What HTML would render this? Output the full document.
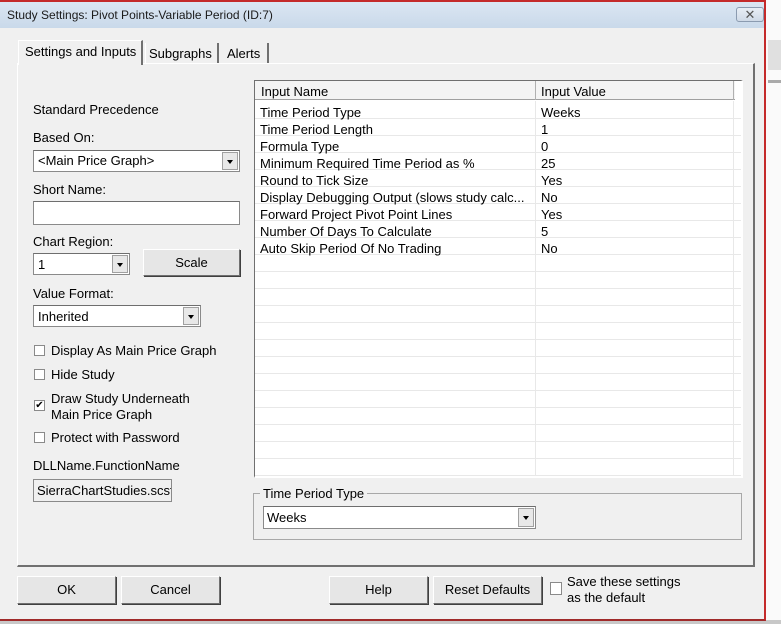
<!DOCTYPE html>
<html><head><style>
*{box-sizing:border-box;margin:0;padding:0}
body{width:781px;height:624px;overflow:hidden;background:#f0f0f0;font-family:"Liberation Sans",sans-serif;font-size:13px;color:#000;position:relative}
.a{position:absolute}
.t{position:absolute;white-space:nowrap;line-height:16px}
.combo{position:absolute;background:#fff;border:1px solid #8a8a8a;border-top-color:#6e6e6e}
.combo .arr{position:absolute;right:1px;top:1px;bottom:1px;width:16px;background:#e8e8e8;border:1px solid #a0a0a0}
.combo .arr:after{content:"";position:absolute;left:4px;top:7px;border-left:3.5px solid transparent;border-right:3.5px solid transparent;border-top:4px solid #000}
.btn{position:absolute;background:#e6e6e6;border:1px solid #fff;border-right-color:#707070;border-bottom-color:#707070;box-shadow:1px 1px 0 #404040;text-align:center;line-height:26px}
.cb{position:absolute;width:11px;height:11px;background:#fff;border:1px solid #8a8a8a}
</style></head><body>
<div class="a" style="left:766px;top:0;width:15px;height:624px;background:#fafafa"></div>
<div class="a" style="left:768px;top:40px;width:13px;height:30px;background:#e0e0e0"></div>
<div class="a" style="left:768px;top:80px;width:13px;height:3px;background:#aaa"></div>
<div class="a" style="left:0;top:620px;width:781px;height:4px;background:#c8c8c8"></div>
<div class="a" style="left:0;top:0;width:766px;height:621px;background:#f0f0f0;border-right:2px solid #c42a2a;border-bottom:2px solid #a02a2a;border-top:2px solid #c42a2a"></div>
<div class="a" style="left:0;top:2px;width:764px;height:26px;background:linear-gradient(#dbe6f2,#c9d9ea)"></div>
<div class="t" style="left:7px;top:7px;font-size:12px;color:#1a1a1a">Study Settings: Pivot Points-Variable Period (ID:7)</div>
<div class="a" style="left:736px;top:7px;width:28px;height:15px;border:1px solid #8b9bb0;border-radius:3px;background:linear-gradient(#e8eef5,#cfdae7);text-align:center;font-size:13px;line-height:13px;color:#555">✕</div>

<div class="a" style="left:17px;top:63px;width:738px;height:504px;border:1px solid #fff;border-right:2px solid #707070;border-bottom:2px solid #707070"></div>
<div class="a" style="left:18px;top:40px;width:125px;height:25px;background:#f0f0f0;border:1px solid #fff;border-right:2px solid #707070;border-bottom:none"></div>
<div class="t" style="left:25px;top:44px">Settings and Inputs</div>
<div class="a" style="left:145px;top:43px;width:74px;height:20px;border-left:1px solid #fff;border-right:2px solid #707070"></div>
<div class="t" style="left:149px;top:46px">Subgraphs</div>
<div class="a" style="left:221px;top:43px;width:48px;height:20px;border-right:2px solid #707070"></div>
<div class="t" style="left:227px;top:46px">Alerts</div>

<div class="t" style="left:33px;top:102px">Standard Precedence</div>
<div class="t" style="left:33px;top:130px">Based On:</div>
<div class="combo" style="left:33px;top:150px;width:207px;height:22px"><span class="t" style="left:4px;top:2px">&lt;Main Price Graph&gt;</span><div class="arr"></div></div>
<div class="t" style="left:33px;top:182px">Short Name:</div>
<div class="combo" style="left:33px;top:201px;width:207px;height:24px"></div>
<div class="t" style="left:33px;top:234px">Chart Region:</div>
<div class="combo" style="left:33px;top:253px;width:97px;height:22px"><span class="t" style="left:4px;top:3px">1</span><div class="arr"></div></div>
<div class="btn" style="left:143px;top:249px;width:97px;height:27px">Scale</div>
<div class="t" style="left:33px;top:286px">Value Format:</div>
<div class="combo" style="left:33px;top:305px;width:168px;height:22px"><span class="t" style="left:4px;top:3px">Inherited</span><div class="arr"></div></div>

<div class="cb" style="left:34px;top:345px"></div><div class="t" style="left:51px;top:343px">Display As Main Price Graph</div>
<div class="cb" style="left:34px;top:369px"></div><div class="t" style="left:51px;top:367px">Hide Study</div>
<div class="cb" style="left:34px;top:400px;font-size:10px;line-height:9px;text-align:center">✔</div><div class="t" style="left:51px;top:391px">Draw Study Underneath</div><div class="t" style="left:51px;top:407px">Main Price Graph</div>
<div class="cb" style="left:34px;top:432px"></div><div class="t" style="left:51px;top:430px">Protect with Password</div>
<div class="t" style="left:33px;top:458px">DLLName.FunctionName</div>
<div class="a" style="left:33px;top:479px;width:139px;height:23px;border:1px solid #8a8a8a;background:#f0f0f0;overflow:hidden"><span class="t" style="left:3px;top:3px">SierraChartStudies.scsf</span></div>

<div class="a" style="left:254px;top:80px;width:489px;height:398px;background:#fff;border:1px solid #a0a0a0;border-top-color:#707070;border-left-color:#707070;border-right:2px solid #fff;border-bottom:2px solid #fff;overflow:hidden">
<div class="a" style="left:0;top:0;width:480px;height:19px;background:#f4f4f4;border-bottom:1px solid #a0a0a0"></div>
<div class="a" style="left:280px;top:0;width:1px;height:19px;background:#b0b0b0"></div>
<div class="a" style="left:478px;top:0;width:1px;height:19px;background:#b0b0b0"></div>
<div class="t" style="left:6px;top:3px">Input Name</div><div class="t" style="left:286px;top:3px">Input Value</div>
<div class="a" style="left:0;top:21px;width:486px;height:380px;background:repeating-linear-gradient(#fff 0 16px,#e8e8e8 16px 17px)"></div>
<div class="a" style="left:280px;top:20px;width:1px;height:380px;background:#e8e8e8"></div>
<div class="a" style="left:478px;top:20px;width:1px;height:380px;background:#e8e8e8"></div>
<div class="t" style="left:5px;top:23px;line-height:17px">Time Period Type<br>Time Period Length<br>Formula Type<br>Minimum Required Time Period as %<br>Round to Tick Size<br>Display Debugging Output (slows study calc...<br>Forward Project Pivot Point Lines<br>Number Of Days To Calculate<br>Auto Skip Period Of No Trading</div>
<div class="t" style="left:286px;top:23px;line-height:17px">Weeks<br>1<br>0<br>25<br>Yes<br>No<br>Yes<br>5<br>No</div>
</div>

<div class="a" style="left:253px;top:493px;width:489px;height:47px;border:1px solid #a8a8a8"></div>
<div class="t" style="left:260px;top:486px;background:#f0f0f0;padding:0 3px">Time Period Type</div>
<div class="combo" style="left:263px;top:506px;width:273px;height:23px"><span class="t" style="left:3px;top:3px">Weeks</span><div class="arr"></div></div>

<div class="btn" style="left:17px;top:576px;width:99px;height:28px">OK</div>
<div class="btn" style="left:121px;top:576px;width:99px;height:28px">Cancel</div>
<div class="btn" style="left:329px;top:576px;width:99px;height:28px">Help</div>
<div class="btn" style="left:433px;top:576px;width:109px;height:28px">Reset Defaults</div>
<div class="cb" style="left:550px;top:582px;width:12px;height:13px"></div>
<div class="t" style="left:567px;top:574px">Save these settings</div>
<div class="t" style="left:567px;top:590px">as the default</div>
</body></html>
